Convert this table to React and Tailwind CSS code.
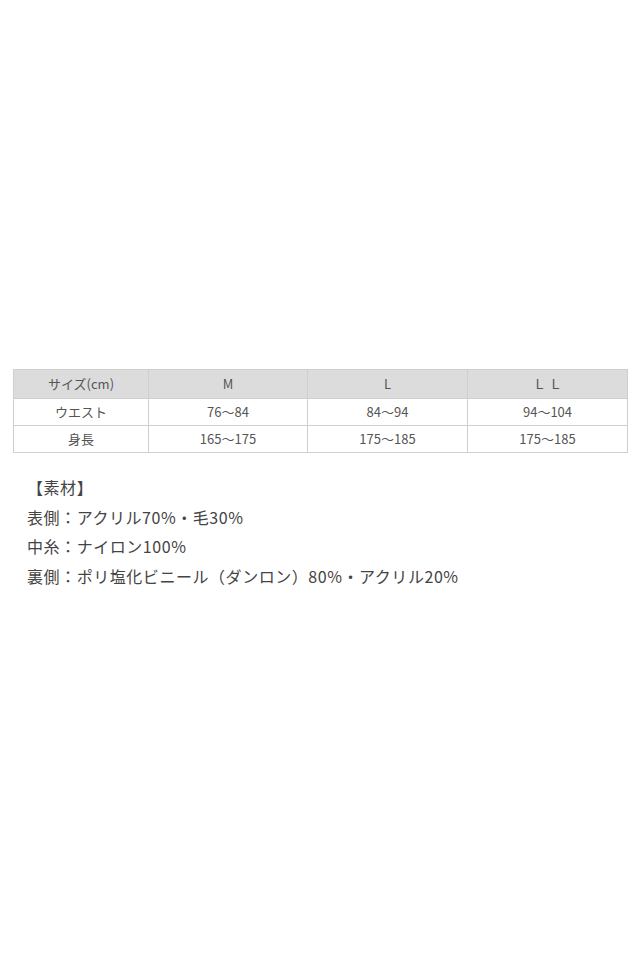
const sizes = [
  { label: 'ウエスト', values: ['76〜84', '84〜94', '94〜104'] },
  { label: '身長', values: ['165〜175', '175〜185', '175〜185'] },
]

export default function App() {
  return (
    <div
      className="w-[640px] h-[960px] bg-white text-[#555]"
      style={{ fontFamily: '"Noto Sans CJK JP", "Noto Sans", sans-serif' }}
    >
      <div className="pt-[369px] px-[13px]">
        <table className="w-full border-collapse table-fixed text-[13px]">
          <colgroup>
            <col className="w-[135px]" />
            <col className="w-[159px]" />
            <col className="w-[160px]" />
            <col className="w-[160px]" />
          </colgroup>
          <thead>
            <tr className="bg-[#dcdcdc] h-[29px]">
              <th className="border border-[#cfcfcf] font-normal">サイズ(cm)</th>
              <th className="border border-[#cfcfcf] font-normal">M</th>
              <th className="border border-[#cfcfcf] font-normal">L</th>
              <th className="border border-[#cfcfcf] font-normal">Ｌ Ｌ</th>
            </tr>
          </thead>
          <tbody>
            {sizes.map(row => (
              <tr key={row.label} className="h-[27px]">
                <td className="border border-[#cfcfcf] text-center">{row.label}</td>
                {row.values.map((v, i) => (
                  <td key={i} className="border border-[#cfcfcf] text-center">{v}</td>
                ))}
              </tr>
            ))}
          </tbody>
        </table>

        {/* 素材 */}
        <div className="mt-[20px] pl-[14px] text-[16px] leading-[29.5px] tracking-[0.55px] text-[#444]">
          <p>【素材】</p>
          <p>表側：アクリル70%・毛30%</p>
          <p>中糸：ナイロン100%</p>
          <p>裏側：ポリ塩化ビニール（ダンロン）80%・アクリル20%</p>
        </div>
      </div>
    </div>
  )
}
